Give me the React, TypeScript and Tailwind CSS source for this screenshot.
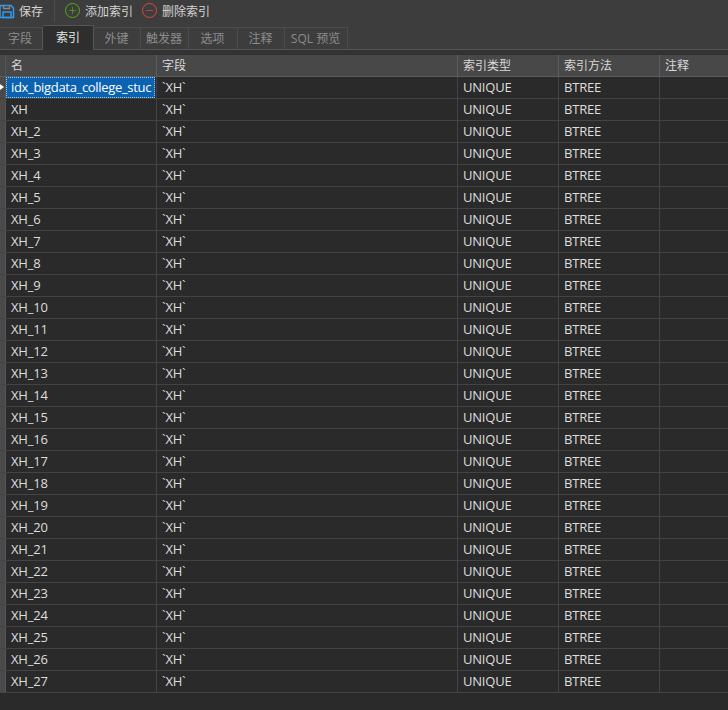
import { Plus, Minus } from 'lucide-react';

const tabs = ['字段', '索引', '外键', '触发器', '选项', '注释', 'SQL 预览'];

const tabWidths = ['w-[43px]', 'w-[51px]', 'w-[47px]', 'w-[48px]', 'w-[49px]', 'w-[47px]', 'w-[63px]'];

const names = ['XH', ...Array.from({ length: 26 }, (_, i) => `XH_${i + 2}`)];

const Cell = ({ className, children }: { className: string; children?: React.ReactNode }) => (
  <div className={`shrink-0 h-full pl-[5px] border-r border-[#434343] leading-[21px] tracking-[-0.2px] overflow-hidden whitespace-nowrap ${className}`}>
    {children}
  </div>
);

const Row = ({ name, selected }: { name: string; selected?: boolean }) => (
  <div className="flex h-[22px] border-b border-[#434343]">
    <div className="w-[6px] shrink-0 bg-[#4a4a4a] border-r border-[#555555] relative">
      {selected && (
        <div className="absolute left-0 top-[7px] w-0 h-0 border-y-[3px] border-y-transparent border-l-[4px] border-l-white" />
      )}
    </div>
    {selected ? (
      <div className="w-[151px] shrink-0 h-full border-r border-[#434343] pr-[1px]">
        <div className="h-[21px] bg-[#0a62b0] border border-dotted border-[#9cc8f0] pl-[4px] leading-[19px] tracking-[-0.32px] overflow-hidden whitespace-nowrap text-white">
          {name}
        </div>
      </div>
    ) : (
      <Cell className="w-[151px]">{name}</Cell>
    )}
    <Cell className="w-[301px]">`XH`</Cell>
    <Cell className="w-[101px]">UNIQUE</Cell>
    <Cell className="w-[101px]">BTREE</Cell>
    <Cell className="flex-1 border-r-0" />
  </div>
);

const App = () => {
  return (
    <div className="w-[728px] h-[710px] overflow-hidden bg-[#2a2a2a] text-[#dedede] text-[13px] font-['Open_Sans','Noto_Sans_CJK_SC',sans-serif]">
      {/* Toolbar */}
      <div className="h-[25px] pb-[4px] bg-[#3d3d3d] flex items-center">
        <svg width="16" height="16" viewBox="0 0 16 16" fill="none" className="-ml-[1px]">
          <path d="M1 2.500h11l2.500 2.500v9.500H1z" stroke="#2e9bf0" strokeWidth="1.5" />
          <path d="M4 9h8v5.500H4z" stroke="#2e9bf0" strokeWidth="1.5" />
          <path d="M4.500 2.500v3h6v-3" stroke="#8a8a8a" strokeWidth="1.3" />
        </svg>
        <span className="ml-[4px] mt-[2px] text-[12px] text-[#d4d4d4]">保存</span>
        <div className="w-px h-[22px] bg-[#4c4c4c] ml-[11px]" />
        <div className="ml-[10px] w-[15px] h-[15px] rounded-full border-[1.5px] border-[#4fae14] flex items-center justify-center">
          <Plus size={11} strokeWidth={1.5} className="text-[#4fae14]" />
        </div>
        <span className="ml-[5px] mt-[2px] text-[12px] text-[#d4d4d4]">添加索引</span>
        <div className="ml-[9px] w-[15px] h-[15px] rounded-full border-[1.5px] border-[#dd4b3e] flex items-center justify-center">
          <Minus size={11} strokeWidth={1.5} className="text-[#dd4b3e]" />
        </div>
        <span className="ml-[5px] mt-[2px] text-[12px] text-[#d4d4d4]">删除索引</span>
      </div>

      {/* Tabs */}
      <div className="h-[25px] bg-[#3d3d3d] flex items-start border-b border-[#555555]">
        {tabs.map((tab, i) => (
          <div
            key={tab}
            className={
              i === 1
                ? `${tabWidths[i]} h-[25px] bg-[#2e2e2e] border-r border-t border-[#555555] text-[#e8e8e8] text-[12px] flex items-center justify-center`
                : `${tabWidths[i]} mt-[2px] h-[22px] border-r border-t ${i === 0 ? 'border-r-[#555555] pr-[2px]' : 'pr-[1px]'} border-[#4c4c4c] text-[#8c8c8c] text-[12px] flex items-center justify-center`
            }
          >
            {tab}
          </div>
        ))}
      </div>

      <div className="h-[5px] bg-[#333333]" />

      {/* Header */}
      <div className="flex h-[22px] bg-[#484848] border-b border-[#5c5c5c] text-[#d8d8d8] text-[12px] leading-[22px]">
        <div className="w-[6px] shrink-0 border-r border-[#555555]" />
        <div className="w-[151px] shrink-0 pl-[5px] border-r border-[#5c5c5c]">名</div>
        <div className="w-[301px] shrink-0 pl-[5px] border-r border-[#5c5c5c]">字段</div>
        <div className="w-[101px] shrink-0 pl-[5px] border-r border-[#5c5c5c]">索引类型</div>
        <div className="w-[101px] shrink-0 pl-[5px] border-r border-[#5c5c5c]">索引方法</div>
        <div className="flex-1 pl-[5px]">注释</div>
      </div>

      <Row name="idx_bigdata_college_stuc" selected />
      {names.map((name) => (
        <Row key={name} name={name} />
      ))}
    </div>
  );
};

export default App;
